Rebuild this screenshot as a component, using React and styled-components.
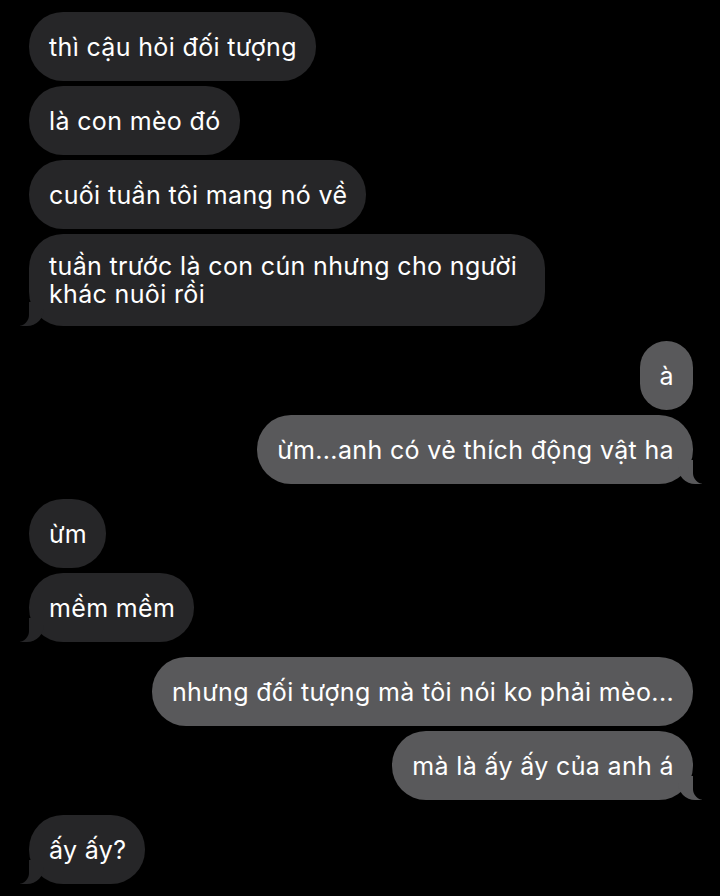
import React from 'react';
import styled, { createGlobalStyle, css } from 'styled-components';

const GlobalStyle = createGlobalStyle`
    html, body {
        margin: 0;
        padding: 0;
        background: #000;
    }
    body {
        font-family: Inter, "Noto Sans", "Liberation Sans", sans-serif;
        -webkit-font-smoothing: antialiased;
    }
`;

// wide: wrapped bubbles fill the max bubble width
const messages = [
    { text: 'thì cậu hỏi đối tượng', fromSelf: false },
    { text: 'là con mèo đó', fromSelf: false },
    { text: 'cuối tuần tôi mang nó về', fromSelf: false },
    { text: 'tuần trước là con cún nhưng cho người\nkhác nuôi rồi', fromSelf: false, tail: true, wide: true },
    { text: 'à', fromSelf: true },
    { text: 'ừm...anh có vẻ thích động vật ha', fromSelf: true, tail: true },
    { text: 'ừm', fromSelf: false },
    { text: 'mềm mềm', fromSelf: false, tail: true },
    { text: 'nhưng đối tượng mà tôi nói ko phải mèo...', fromSelf: true },
    { text: 'mà là ấy ấy của anh á', fromSelf: true, tail: true },
    { text: 'ấy ấy?', fromSelf: false, tail: true },
];

export default function App() {
    return (
        <>
            <GlobalStyle />
            <Thread>
                {messages.map((m, i) => {
                    const next = messages[i + 1];
                    const groupEnd = next && next.fromSelf !== m.fromSelf;
                    return (
                        <Bubble
                            key={i}
                            $sent={m.fromSelf}
                            $tail={m.tail}
                            $wide={m.wide}
                            $gap={groupEnd ? 15 : 5}
                        >
                            {m.text}
                        </Bubble>
                    );
                })}
            </Thread>
        </>
    );
}

const Thread = styled.div`
    width: 720px;
    height: 896px;
    box-sizing: border-box;
    padding: 12px 27px 0 29px;
    display: flex;
    flex-direction: column;
    align-items: flex-start;
    overflow: hidden;
    background: #000;
`;

const received = '#262628';
const sent = '#59595b';

const Bubble = styled.div`
    position: relative;
    box-sizing: border-box;
    min-height: 69px;
    width: ${(p) => (p.$wide ? '516px' : 'auto')};
    display: flex;
    align-items: center;
    padding: 18px 19px 18px 20px;
    margin-bottom: ${(p) => p.$gap}px;
    border-radius: 34px;
    background: ${(p) => (p.$sent ? sent : received)};
    color: #fff;
    font-size: 25px;
    letter-spacing: 0.35px;
    line-height: 28px;
    white-space: pre-line;
    align-self: ${(p) => (p.$sent ? 'flex-end' : 'flex-start')};

    ${(p) =>
        p.$tail &&
        css`
            &::before {
                content: '';
                position: absolute;
                bottom: 0;
                ${p.$sent ? 'right: -9px;' : 'left: -9px;'}
                width: 24px;
                height: 24px;
                background: ${p.$sent ? sent : received};
                ${p.$sent ? 'border-bottom-left-radius: 17px;' : 'border-bottom-right-radius: 17px;'}
            }
            &::after {
                content: '';
                position: absolute;
                bottom: 0;
                ${p.$sent ? 'right: -13px;' : 'left: -13px;'}
                width: 13px;
                height: 24px;
                background: #000;
                ${p.$sent ? 'border-bottom-left-radius: 11px;' : 'border-bottom-right-radius: 11px;'}
            }
        `}
`;
